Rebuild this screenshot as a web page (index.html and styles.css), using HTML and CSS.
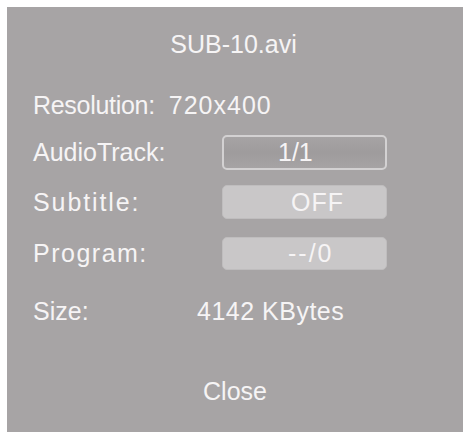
FILE: index.html
```html
<!DOCTYPE html>
<html>
<head>
<meta charset="utf-8">
<link rel="stylesheet" href="styles.css">
</head>
<body>
<div class="panel">
  <div class="title">SUB-10.avi</div>
  <div class="row row-res">
    <span class="label-res">Resolution:</span>
    <span class="value value-res">720x400</span>
  </div>
  <div class="row row-audio">
    <span class="label">AudioTrack:</span>
    <span class="box box-outline v-audio">1/1</span>
  </div>
  <div class="row row-sub">
    <span class="label spaced">Subtitle:</span>
    <span class="box box-fill v-sub">OFF</span>
  </div>
  <div class="row row-prog">
    <span class="label spaced-sm">Program:</span>
    <span class="box box-fill v-prog">--/0</span>
  </div>
  <div class="row row-size">
    <span class="label label-size">Size:</span>
    <span class="value value-size">4142 KBytes</span>
  </div>
  <div class="close">Close</div>
</div>
</body>
</html>
```
FILE: styles.css
```css
html, body {
  margin: 0;
  padding: 0;
  background: #ffffff;
}
body {
  width: 467px;
  height: 432px;
  overflow: hidden;
  font-family: "Liberation Sans", Arial, sans-serif;
}
.panel {
  margin: 7px 0 0 7px;
  width: 456px;
  height: 425px;
  background: #a7a4a5;
  box-sizing: border-box;
  padding: 22px 0 0 26px;
  color: #f6f4f5;
  font-size: 25px;
  display: flex;
  flex-direction: column;
}
.title {
  height: 30px;
  line-height: 30px;
  text-align: center;
  margin-left: -26px;
  padding-right: 3px;
}
.row {
  display: flex;
  align-items: center;
}
.row-res {
  height: 30px;
  line-height: 30px;
  margin-top: 31px;
}
.row-audio {
  height: 35px;
  margin-top: 15px;
}
.row-sub {
  height: 34px;
  margin-top: 15px;
}
.row-prog {
  height: 33px;
  margin-top: 18px;
}
.row-size {
  height: 30px;
  margin-top: 26px;
}
.label-res {
  margin-right: 14px;
  letter-spacing: -0.3px;
}
.value {
  white-space: nowrap;
}
.value-res {
  letter-spacing: 1px;
}
.value-size {
  letter-spacing: 0.5px;
}
.label {
  width: 189px;
  flex: none;
  white-space: nowrap;
}
.label-size {
  width: 164px;
}
.spaced {
  letter-spacing: 1.9px;
}
.spaced-sm {
  letter-spacing: 1.5px;
}
.box {
  width: 165px;
  height: 100%;
  box-sizing: border-box;
  border-radius: 5px;
  display: flex;
  align-items: center;
  white-space: nowrap;
}
.box-outline {
  border: 2px solid #d3d1d2;
  background: linear-gradient(to bottom, #a6a3a4 0%, #9f9c9d 45%, #9f9c9d 55%, #a6a3a4 100%);
}
.box-fill {
  background: #c9c7c8;
  border: 1px solid #bfbdbe;
}
.v-audio {
  padding-left: 54px;
}
.v-sub {
  padding-left: 68px;
  letter-spacing: 1px;
}
.v-prog {
  padding-left: 65px;
  letter-spacing: 2px;
}
.close {
  margin-top: 50px;
  margin-left: -26px;
  height: 30px;
  line-height: 30px;
  text-align: center;
}
```
